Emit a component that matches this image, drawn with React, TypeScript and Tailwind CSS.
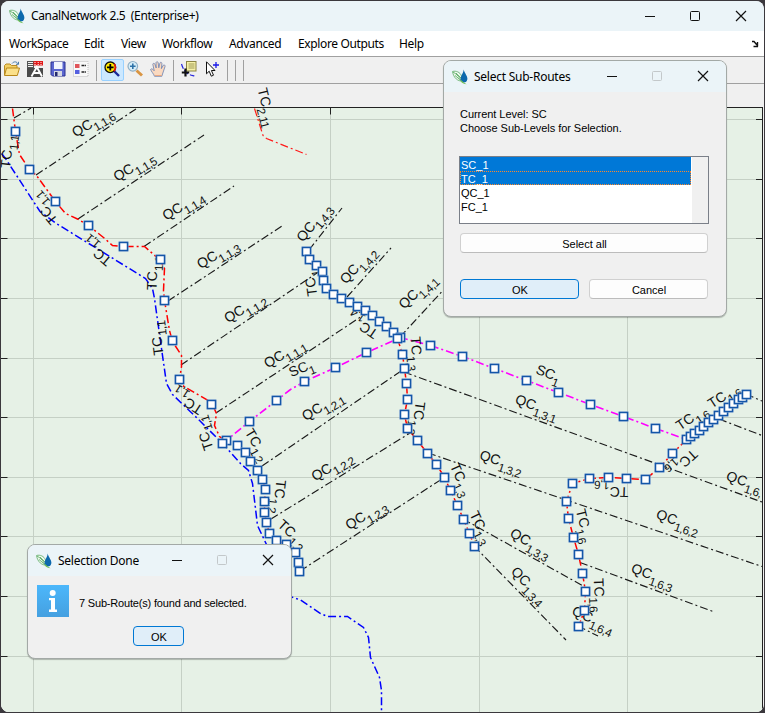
import type { ReactNode } from "react";

type Pt = [number, number];

const GRID_X = [33.5, 181.5, 330.5, 479.5, 627.5];
const GRID_Y = [119.5, 179.5, 238.5, 298.5, 358.5, 417.5, 477.5, 536.5, 596.5, 656.5];

const TC11: Pt[] = [[12, 108], [15, 131], [19, 154], [29, 169], [36, 175], [55, 201], [65, 213], [78, 219], [88, 225], [103, 237], [112, 245], [123, 246], [144, 246], [160, 260], [164, 268], [163, 290], [164, 300], [169, 330], [172, 341], [181, 355], [181, 366], [179, 379], [182, 385], [211, 402], [216, 413], [214, 425], [219, 436], [226, 441]];
const TC211: Pt[] = [[254, 108], [262.5, 135], [266, 138], [306, 154]];

const M_TC11: Pt[] = [[15, 131], [29, 169], [55, 201], [88, 225], [123, 246], [160, 259], [164, 300], [172, 340], [179, 379], [211, 404]];
const M_TC12: Pt[] = [[226, 440], [222, 443], [237, 445], [245, 452], [250, 461], [257, 470], [262, 479], [265, 489], [264, 501], [264, 512], [266, 522], [269, 533], [276, 540], [286, 544], [295, 552], [298, 562], [299, 571]];
const M_TC14: Pt[] = [[306, 251], [309, 259], [316, 265], [322, 271], [323, 280], [326, 288], [333, 294], [341, 298], [349, 302], [357, 306], [365, 310], [372, 315], [379, 321], [386, 326], [393, 332], [400, 337]];
const M_TC13: Pt[] = [[397, 338], [402, 354], [404, 368], [406, 383], [407, 399], [404, 414], [407, 428], [417, 440], [427, 453], [436, 464], [444, 477], [450, 490], [457, 505], [463, 519], [469, 533], [474, 546]];
const M_SCW: Pt[] = [[249, 421], [276, 400], [304, 381], [335, 367], [366, 352]];
const M_SCE: Pt[] = [[430, 345], [462, 356], [494, 368], [526, 380], [558, 392], [590, 404], [623, 416], [655, 428]];
const M_TC16: Pt[] = [[686, 439], [672, 453], [659, 467], [645, 479], [626, 478], [608, 477], [589, 478], [572, 483], [566, 501], [568, 518], [573, 537], [578, 554], [582, 573], [585, 591], [584, 610], [578, 626]];
const M_TC16B: Pt[] = [[690, 436], [694, 433], [699, 430], [703, 426], [708, 422], [713, 419], [718, 415], [723, 411], [728, 407], [733, 403], [738, 399], [742, 397], [746, 394]];

const SC: Pt[] = [[222, 443], [249, 421], [276, 400], [290, 389], [304, 381], [335, 367], [366, 352], [400, 337], [430, 345], [462, 356], [494, 368], [526, 380], [558, 392], [590, 404], [623, 416], [655, 428], [686, 439]];
const RIVER_A: Pt[] = [[1, 153], [5, 158], [39.5, 211], [55, 222.5], [145, 278], [152, 288], [154, 298], [161, 348], [166, 383], [172, 394], [197, 418], [222, 443], [240, 463], [248, 470], [252, 483], [257, 525], [266, 544], [280, 580]];
const RIVER_B: Pt[] = [[285, 595], [293, 597], [300, 599.5], [320, 613], [327, 616], [347, 616], [363, 627], [368, 637], [370, 657], [379, 677], [381, 690], [381, 712]];

const BRANCHES: [number, number, number, number][] = [
  [14, 118, 31, 108], [36, 175, 136, 109], [78, 219, 204, 135], [144, 246.5, 234, 186],
  [168, 301, 282, 226], [181, 365, 320, 271], [216, 413, 368, 312], [262, 466, 404, 369],
  [271, 519, 410, 433], [300, 571, 445, 477], [309, 250, 342, 208], [347, 297, 391, 248],
  [400, 337, 460, 272], [404, 372, 762, 502], [428, 453, 762, 566.5], [463, 519, 585, 587],
  [474, 546, 566, 640], [580, 562.5, 713, 611.5], [578, 626, 598, 636], [746, 394, 762, 401],
  [719, 419, 762, 435.5],
];

const LABELS: [number, number, number, string, string][] = [
  [77.3, 130.7, -31, "QC", "1,1,6"], [118.7, 175, -31, "QC", "1,1,5"], [167.7, 214, -31, "QC", "1,1,4"],
  [202.3, 262.3, -31, "QC", "1,1,3"], [229.5, 316.5, -31, "QC", "1,1,2"], [269.3, 361.7, -31, "QC", "1,1,1"],
  [307.3, 414.3, -31, "QC", "1,2,1"], [316.7, 474.7, -31, "QC", "1,2,2"], [350.7, 523.3, -31, "QC", "1,2,3"],
  [302.3, 235.7, -51, "QC", "1,4,3"], [345.7, 277.7, -48, "QC", "1,4,2"], [404.3, 302.7, -43, "QC", "1,4,1"],
  [520.7, 400, 20, "QC", "1,3,1"], [485, 455.7, 18, "QC", "1,3,2"], [515.7, 534, 29, "QC", "1,3,3"],
  [517.3, 572.3, 46, "QC", "1,3,4"], [731.7, 476.7, 19, "QC", "1,6,"], [661.7, 515, 19, "QC", "1,6,2"],
  [636.7, 569, 20, "QC", "1,6,3"], [577.7, 611.7, 24, "QC", "1,6,4"],
  [5.5, 164, -84, "TC", "1,1"], [51.7, 219.5, -129, "TC", "1,1"], [106, 260.5, -140, "TC", "1,1"],
  [151.7, 285.7, -88, "TC", "1,1"], [158, 351, -97, "TC", "1,1"], [197.3, 409, -147, "TC", "1,1"],
  [207.3, 446, -108, "TC", "1,1"], [263.3, 92.3, 76, "TC", "2,11"],
  [311.7, 292, -98, "TC", "1,4"], [372.7, 333.3, -146, "TC", "1,4"],
  [416, 340.7, 86, "TC", "1,3"], [420.3, 406, 97, "TC", "1,3"], [456, 467.7, 66, "TC", "1,3"], [475.7, 515.7, 64, "TC", "1,3"],
  [251, 433.3, 60, "TC", "1,2"], [281, 484.3, 96, "TC", "1,2"], [283.3, 525, 42, "TC", "1,2"],
  [680.7, 424.3, -34, "TC", "1,6"], [712.7, 402.3, -33, "TC", "1,6"], [692.3, 455, 138, "TC", "1,6"],
  [624, 492.3, 182, "TC", "1,6"], [581.7, 513.3, 76, "TC", "1,6"], [599, 582.3, 88, "TC", "1,6"],
  [293.3, 371, -23, "SC", "1"], [540.7, 370, 21, "SC", "1"],
];

const pts = (p: Pt[]) => p.map((q) => q.join(",")).join(" ");

function Route({ p, color, w = 1.5 }: { p: Pt[]; color: string; w?: number }) {
  return <polyline points={pts(p)} fill="none" stroke={color} strokeWidth={w} strokeDasharray="8 3 2 3" transform="translate(0.5 0.5)" />;
}

function Markers({ p }: { p: Pt[] }) {
  return (
    <>
      {p.map(([x, y], i) => (
        <g key={i}>
          <rect x={x - 4.5} y={y - 4.5} width={10} height={10} fill="#8fb2dc" />
          <rect x={x - 3.5} y={y - 3.5} width={8} height={8} fill="#fff" stroke="#1456a8" strokeWidth={1.5} />
        </g>
      ))}
    </>
  );
}

function NetworkPlot() {
  return (
    <svg className="block h-[628px] w-[763px]" viewBox="1 84 763 628" fontFamily="'Liberation Sans', Arial, sans-serif">
      <rect x="1" y="84" width="763" height="628" fill="#f0f0f0" />
      <rect x="1" y="107" width="761" height="605" fill="#e6f1e6" />
      <g stroke="#c5d0c5" strokeWidth="1">
        {GRID_X.map((x) => <line key={x} x1={x} x2={x} y1="108" y2="712" />)}
        {GRID_Y.map((y) => <line key={y} x1="1" x2="762" y1={y} y2={y} />)}
      </g>
      <g stroke="#222" strokeWidth="1">
        <line x1="1" x2="763" y1="107.5" y2="107.5" />
        <line x1="762.5" x2="762.5" y1="107" y2="712" />
        {GRID_X.map((x) => <line key={x} x1={x} x2={x} y1="108" y2="114.5" />)}
        {GRID_Y.map((y) => <line key={y} x1="1" x2="7.5" y1={y} y2={y} />)}
        {GRID_Y.map((y) => <line key={y} x1="756" x2="762" y1={y} y2={y} />)}
      </g>
      <g stroke="#1a1a1a" strokeWidth="1.15" strokeDasharray="8 3 2 3">
        {BRANCHES.map(([a, b, c, d], i) => <line key={i} x1={a} y1={b} x2={c} y2={d} />)}
      </g>
      <Route p={RIVER_A} color="#0000ff" />
      <Route p={RIVER_B} color="#0000ff" />
      <Route p={TC11} color="#ff0000" />
      <Route p={TC211} color="#ff1a1a" w={1.2} />
      <Route p={M_TC12} color="#ff0000" />
      <Route p={M_TC14} color="#ff0000" />
      <Route p={M_TC13} color="#ff0000" />
      <Route p={M_TC16} color="#ff0000" />
      <Route p={M_TC16B} color="#ff0000" />
      <Route p={SC} color="#ff00ff" w={1.6} />
      {LABELS.map(([x, y, a, base, sub], i) => (
        <g key={i} transform={`translate(${x} ${y}) rotate(${a})`} fill="#111">
          <text x={base === "QC" ? -5 : -4.3} y="5" fontSize="14">{base}</text>
          <text x={base === "QC" ? 16 : 14.8} y="10.6" fontSize="11.7" letterSpacing="-0.5">{sub}</text>
        </g>
      ))}
      <Markers p={M_TC11} />
      <Markers p={M_TC12} />
      <Markers p={M_TC14} />
      <Markers p={M_SCW} />
      <Markers p={M_TC13} />
      <Markers p={M_SCE} />
      <Markers p={M_TC16} />
      <Markers p={M_TC16B} />
    </svg>
  );
}

function Logo() {
  return (
    <svg className="h-4 w-4 shrink-0" viewBox="0 0 16 16">
      <path d="M0.5 2.5 C4 1.5 8 3 9.5 7 L10.5 12 C6 12.5 1.5 9 0.5 2.5Z" fill="#f0f8ef" stroke="#6bb374" strokeWidth="0.9" />
      <path d="M1 3 C5 5 8 9 10.5 13.5 M4 4 L9 9 M3 6.5 L9 11.5" fill="none" stroke="#4ba558" strokeWidth="0.8" />
      <path d="M11.8 0.5 C12.2 4 15.6 6.5 15.4 10 C15.2 12.4 13.6 13.6 11.8 13.6 C9.8 13.6 8.4 12 8.6 9.8 C8.8 6.8 11.4 4 11.8 0.5Z" fill="#0c69ad" />
      <path d="M9 11 C10.5 12.5 12.5 13.8 14.6 15.2 C12.4 15 10.2 14.2 8.8 12.4Z" fill="#74c05a" />
    </svg>
  );
}

function WindowButtons({ dim = false }: { dim?: boolean }) {
  return (
    <div className="ml-auto flex h-full items-center">
      <svg className="h-[31px] w-[46px]" viewBox="0 0 46 31"><path d="M18 15.5H28" stroke="#111" /></svg>
      <svg className="h-[31px] w-[45px]" viewBox="0 0 45 31"><rect x="17.5" y="10.5" width="9" height="9" rx="1" fill="none" stroke={dim ? "#c3c8ca" : "#111"} strokeWidth="1" /></svg>
      <svg className="h-[31px] w-[46px]" viewBox="0 0 46 31"><path d="M18 10L28 20M28 10L18 20" stroke="#111" strokeWidth="1.2" /></svg>
    </div>
  );
}

function Sep({ className }: { className: string }) {
  return <div className={`h-[21px] w-px shrink-0 bg-[#a0a0a0] ${className}`} />;
}

function Tool({ children, active = false }: { children: ReactNode; active?: boolean }) {
  return (
    <div className={`flex h-[22px] w-[23px] shrink-0 items-center justify-center rounded-[2px] border pb-0.5 pr-0.5 ${active ? "border-[#99d1ff] bg-[#cce8ff]" : "border-transparent"}`}>
      <svg className="h-4 w-4 shrink-0 overflow-visible" viewBox="0 0 16 16">{children}</svg>
    </div>
  );
}

function Toolbar() {
  return (
    <div className="flex h-[27px] shrink-0 items-center border-b border-[#a0a0a0] bg-[#f0f0f0]">
      <Tool>
        <path d="M0.5 14V4.5L2 3H6L7.5 4.5H13V7" fill="#f3cf63" stroke="#b88a24" />
        <path d="M0.5 14.5L2.5 7H15.5L13.3 14.5Z" fill="#fbe08a" stroke="#b88718" />
        <path d="M8 2.5C10 0 13 0.5 14 3M14.5 0.8V3.3H12" fill="none" stroke="#4a7cab" />
      </Tool>
      <Tool>
        <rect width="7" height="8" fill="#555" /><path d="M1 1.5H6M1 3.5H6M1 5.5H6" stroke="#f0f0f0" />
        <rect x="0" y="7" width="16" height="9" fill="#4a4a4a" />
        <rect x="6.5" y="0" width="9.5" height="4.5" fill="#e01818" /><path d="M8 1V4M11.2 1V4M14 1V4" stroke="#fff" strokeDasharray="1 1" />
        <path d="M4.5 15.5L9.8 6L15 15.5M6.5 12H13" fill="none" stroke="#fff" strokeWidth="1.9" />
      </Tool>
      <Tool>
        <path d="M1 1H15V15H2.5L1 13.5Z" fill="#5b66d0" stroke="#2a3090" />
        <rect x="4" y="1" width="8.5" height="7" fill="#f2f5fd" />
        <rect x="4" y="10" width="8" height="5" fill="#d5d8e2" /><rect x="5" y="11" width="2.5" height="4" fill="#23286e" />
      </Tool>
      <Tool>
        <rect x="0.5" y="0.5" width="14.5" height="15" fill="#f8f8f8" stroke="#bdbdbd" strokeDasharray="1 1" />
        <rect x="2" y="3" width="4.5" height="4" fill="#e0555a" /><rect x="2" y="9" width="4.5" height="4" fill="#5560e0" />
        <path d="M8.5 4.5H13M8.5 11H13" stroke="#222" strokeWidth="1.3" strokeDasharray="3 0.6" />
      </Tool>
      <Sep className="ml-[3px]" />
      <div className="w-1 shrink-0" />
      <Tool active>
        <path d="M10 10L15 15" stroke="#1b2a9b" strokeWidth="2.4" />
        <circle cx="6.3" cy="6.3" r="5.3" fill="#ffe800" stroke="#101010" strokeWidth="1.3" />
        <path d="M10.2 2.8A5.3 5.3 0 0 1 9.8 10.2" fill="none" stroke="#e21212" strokeWidth="1.7" />
        <path d="M3 6.3H9.6M6.3 3V9.6" stroke="#000" strokeWidth="1.8" />
      </Tool>
      <Tool>
        <path d="M9.5 9.5L15 14.5" stroke="#d99543" strokeWidth="3" />
        <circle cx="5.8" cy="5.3" r="4.8" fill="#d6edf8" stroke="#8faec4" strokeWidth="1.2" />
        <path d="M3 5.3H8.6M5.8 2.5V8.1" stroke="#2f72a8" strokeWidth="1.6" />
      </Tool>
      <Tool>
        <path d="M4.5 15.3C3.5 12.5 1.2 10.5 0.6 8.4C1.4 7.2 3 8.2 4.2 9.8L2.8 3.2C3.2 1.8 4.6 2.2 5 3.4L6.2 7L6 1.6C6.6 0.2 8 0.6 8.2 1.8L8.8 6.8L10 1.8C10.8 0.8 12 1.4 11.9 2.6L11.4 7.6L13.3 4.2C14.4 3.6 15.5 4.4 15 5.6L13.2 11L11.8 15.3Z" fill="#fad9c0" stroke="#6a80b0" strokeWidth="0.8" />
        <path d="M4.8 14.5H11.7" stroke="#e9a880" strokeWidth="1.2" />
      </Tool>
      <Sep className="ml-[3px]" />
      <div className="w-1 shrink-0" />
      <Tool>
        <path d="M0.5 3C2 8 4 11.5 8 13.5C11 14.5 12 14.5 15.5 15.5" fill="none" stroke="#2525dd" strokeWidth="1.2" strokeDasharray="5 2" />
        <rect x="5.5" y="0.5" width="9.5" height="9.5" fill="#f6f1a8" stroke="#8c8545" /><path d="M7.5 3H13.5M7.5 5H13.5M7.5 7H13.5" stroke="#8c8545" strokeWidth="0.8" />
        <path d="M4.5 7.5V15.5M0.8 11.5H8.2" stroke="#111" strokeWidth="2.2" />
      </Tool>
      <Tool>
        <path d="M2.5 0.8V12.8L5.2 10.2L7.3 15.2L9.5 14.2L7.4 9.5H11Z" fill="#fff" stroke="#111" />
        <path d="M12 1V7M9 4H15" stroke="#1818e8" strokeWidth="1.3" />
      </Tool>
      <Sep className="ml-[3px]" />
      <Sep className="ml-[7px]" />
      <Sep className="ml-[7px]" />
    </div>
  );
}

function Button({ children, primary = false, className = "" }: { children: ReactNode; primary?: boolean; className?: string }) {
  return (
    <button className={`flex h-5 items-center justify-center rounded-[4px] border pl-px pt-[3px] text-[11px] leading-none text-black ${primary ? "border-[#0078d4] bg-[#e0eef9]" : "border-[#d0d0d0] border-b-[#bcbcbc] bg-[#fdfdfd]"} ${className}`}>
      {children}
    </button>
  );
}

function Dialog({ title, className, children }: { title: string; className: string; children: ReactNode }) {
  return (
    <section className={`absolute flex flex-col overflow-hidden rounded-lg border border-[#a3a9a6] bg-[#f0f0f0] shadow-[0_1px_1px_rgba(0,0,0,0.25)] ${className}`}>
      <header className="flex h-[31px] shrink-0 items-center bg-[#ebf4f8] pl-2 font-['Noto_Sans','Open_Sans',sans-serif] text-[12px]">
        <Logo />
        <span className="ml-[6px] whitespace-nowrap tracking-[-0.25px]">{title}</span>
        <WindowButtons dim />
      </header>
      {children}
    </section>
  );
}

const MENUS = [
  ["WorkSpace", "w-[75px]"], ["Edit", "w-[37px]"], ["View", "w-[41px]"], ["Workflow", "w-[67px]"],
  ["Advanced", "w-[69px]"], ["Explore Outputs", "w-[101px]"], ["Help", "w-[40px]"],
];

export default function App() {
  return (
    <div className="relative h-[713px] w-[765px] overflow-hidden bg-[#3b383d] p-px font-['Liberation_Sans',Arial,sans-serif] text-black">
      <main className="flex h-[711px] w-[763px] flex-col overflow-hidden rounded-lg bg-[#f0f0f0]">
        <header className="flex h-[30px] shrink-0 items-center bg-[#ebf4f8] pl-2 font-['Noto_Sans','Open_Sans',sans-serif] text-[12px]">
          <Logo />
          <span className="ml-[6px] whitespace-pre tracking-[-0.35px]">{"CanalNetwork 2.5  (Enterprise+)"}</span>
          <WindowButtons />
        </header>
        <nav className="flex h-[26px] shrink-0 items-center border-b border-[#a0a0a0] bg-white pl-2 font-['Noto_Sans','Open_Sans',sans-serif] text-[12px] tracking-[-0.37px]">
          {MENUS.map(([m, w]) => <span key={m} className={`shrink-0 whitespace-nowrap ${w}`}>{m}</span>)}
          <svg className="ml-auto mr-[5px] h-2 w-2" viewBox="0 0 8 8"><path d="M1 1.5H3L6 5M2.5 6.5H7M6.5 2V6.5" fill="none" stroke="#111" strokeWidth="1.4" /></svg>
        </nav>
        <Toolbar />
        <NetworkPlot />
      </main>

      <Dialog title="Select Sub-Routes" className="left-[443px] top-[60px] h-[257px] w-[284px]">
        <div className="flex flex-col px-4">
          <p className="mt-[15px] text-[11px] leading-[14px] tracking-[-0.05px]">Current Level: SC<br />Choose Sub-Levels for Selection.</p>
          <div className="-ml-px mt-[21px] flex h-[68px] w-[250px] border border-[#7a7f88] bg-white text-[11px] leading-[16px]">
            <div className="flex w-[231px] flex-col">
              <div className="h-[14px] bg-[#0078d7] pl-px text-white">SC_1</div>
              <div className="h-[14px] bg-[#0078d7] pl-px text-white outline-1 -outline-offset-1 outline-dotted outline-[#ff8728]">TC_1</div>
              <div className="h-[14px] pl-px">QC_1</div>
              <div className="h-[14px] pl-px">FC_1</div>
            </div>
            <div className="ml-auto w-4 bg-[#f0f0f0]" />
          </div>
          <Button className="mt-[9px] w-[248px]">Select all</Button>
          <div className="mt-[26px] flex gap-[10px]">
            <Button primary className="w-[119px]">OK</Button>
            <Button className="w-[119px]">Cancel</Button>
          </div>
        </div>
      </Dialog>

      <Dialog title="Selection Done" className="left-[27px] top-[544px] h-[115px] w-[265px]">
        <div className="flex items-center pl-[9px] pt-[9px] text-[11px]">
          <svg className="h-8 w-8 shrink-0" viewBox="0 0 32 32">
            <defs><linearGradient id="info" x2="0" y2="1"><stop stopColor="#4cb7fb" /><stop offset="1" stopColor="#45a0e0" /></linearGradient></defs>
            <rect width="32" height="32" fill="url(#info)" />
            <circle cx="15.7" cy="8" r="3" fill="#fff" />
            <path d="M12 13H18V24.5H20V27H12V24.5H14V15.3H12Z" fill="#fff" />
          </svg>
          <span className="ml-[10px] mt-[5px] whitespace-nowrap tracking-[-0.18px]">7 Sub-Route(s) found and selected.</span>
        </div>
        <Button primary className="ml-[105px] mt-[9px] w-[51px]">OK</Button>
      </Dialog>
    </div>
  );
}
